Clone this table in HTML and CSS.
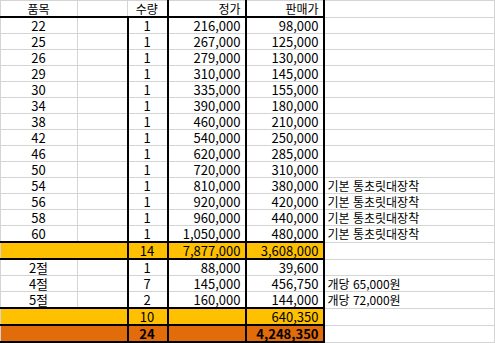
FILE: index.html
```html
<!DOCTYPE html>
<html lang="ko">
<head>
<meta charset="utf-8">
<title>품목 표</title>
<link rel="stylesheet" href="styles.css">
</head>
<body>
<table class="sheet">
  <colgroup>
    <col class="w-item"><col class="w-blank"><col class="w-qty"><col class="w-price"><col class="w-sale"><col class="w-note">
  </colgroup>
  <tr class="hd">
    <td class="item ko">품목</td><td class="blank"></td><td class="qty ko">수량</td><td class="price ko">정가</td><td class="sale ko">판매가</td><td class="note"></td>
  </tr>
  <tr><td class="item">22</td><td class="blank"></td><td class="qty">1</td><td class="price">216,000</td><td class="sale">98,000</td><td class="note"></td></tr>
  <tr><td class="item">25</td><td class="blank"></td><td class="qty">1</td><td class="price">267,000</td><td class="sale">125,000</td><td class="note"></td></tr>
  <tr><td class="item">26</td><td class="blank"></td><td class="qty">1</td><td class="price">279,000</td><td class="sale">130,000</td><td class="note"></td></tr>
  <tr><td class="item">29</td><td class="blank"></td><td class="qty">1</td><td class="price">310,000</td><td class="sale">145,000</td><td class="note"></td></tr>
  <tr><td class="item">30</td><td class="blank"></td><td class="qty">1</td><td class="price">335,000</td><td class="sale">155,000</td><td class="note"></td></tr>
  <tr><td class="item">34</td><td class="blank"></td><td class="qty">1</td><td class="price">390,000</td><td class="sale">180,000</td><td class="note"></td></tr>
  <tr><td class="item">38</td><td class="blank"></td><td class="qty">1</td><td class="price">460,000</td><td class="sale">210,000</td><td class="note"></td></tr>
  <tr><td class="item">42</td><td class="blank"></td><td class="qty">1</td><td class="price">540,000</td><td class="sale">250,000</td><td class="note"></td></tr>
  <tr><td class="item">46</td><td class="blank"></td><td class="qty">1</td><td class="price">620,000</td><td class="sale">285,000</td><td class="note"></td></tr>
  <tr><td class="item">50</td><td class="blank"></td><td class="qty">1</td><td class="price">720,000</td><td class="sale">310,000</td><td class="note"></td></tr>
  <tr><td class="item">54</td><td class="blank"></td><td class="qty">1</td><td class="price">810,000</td><td class="sale">380,000</td><td class="note">기본 통초릿대장착</td></tr>
  <tr><td class="item">56</td><td class="blank"></td><td class="qty">1</td><td class="price">920,000</td><td class="sale">420,000</td><td class="note">기본 통초릿대장착</td></tr>
  <tr><td class="item">58</td><td class="blank"></td><td class="qty">1</td><td class="price">960,000</td><td class="sale">440,000</td><td class="note">기본 통초릿대장착</td></tr>
  <tr><td class="item">60</td><td class="blank"></td><td class="qty">1</td><td class="price">1,050,000</td><td class="sale">480,000</td><td class="note">기본 통초릿대장착</td></tr>
  <tr class="sum"><td class="item"></td><td class="blank"></td><td class="qty">14</td><td class="price">7,877,000</td><td class="sale">3,608,000</td><td class="note"></td></tr>
  <tr><td class="item">2절</td><td class="blank"></td><td class="qty">1</td><td class="price">88,000</td><td class="sale">39,600</td><td class="note"></td></tr>
  <tr><td class="item">4절</td><td class="blank"></td><td class="qty">7</td><td class="price">145,000</td><td class="sale">456,750</td><td class="note">개당 65,000원</td></tr>
  <tr><td class="item">5절</td><td class="blank"></td><td class="qty">2</td><td class="price">160,000</td><td class="sale">144,000</td><td class="note">개당 72,000원</td></tr>
  <tr class="sum"><td class="item"></td><td class="blank"></td><td class="qty">10</td><td class="price"></td><td class="sale">640,350</td><td class="note"></td></tr>
  <tr class="sum total"><td class="item"></td><td class="blank"></td><td class="qty">24</td><td class="price"></td><td class="sale">4,248,350</td><td class="note"></td></tr>
</table>
</body>
</html>
```

FILE: styles.css
```css
html, body {
  margin: 0;
  padding: 0;
  background: #ffffff;
}

body {
  font-family: "Noto Sans CJK KR", "Noto Sans", sans-serif;
  font-size: 13px;
  color: #000000;
}

.sheet {
  border-collapse: collapse;
  table-layout: fixed;
  width: 494px;
}

.w-item { width: 77px; }
.w-blank { width: 50px; }
.w-qty { width: 40px; }
.w-price { width: 78px; }
.w-sale { width: 78px; }
.w-note { width: 171px; }

.sheet tr {
  height: 16px;
}

.sheet td {
  border: 1px solid #d4d4d4;
  padding: 0 4px 0 3px;
  line-height: 15px;
  white-space: nowrap;
  overflow: visible;
  vertical-align: middle;
}

.item { text-align: center; }
.qty { text-align: center; }
.price, .sale { text-align: right; }
.note { text-align: left; font-size: 12px; }
.ko { font-size: 12px; }

.qty, .price, .sale {
  border-left: 2px solid #000000 !important;
  border-right: 2px solid #000000 !important;
}

.hd .qty {
  border-left: 1px solid #d4d4d4 !important;
}

.hd td:not(.note) {
  border-bottom: 2px solid #000000;
}

.sum td:not(.note) {
  background: #ffc000;
  border-top: 2px solid #000000;
  border-bottom: 2px solid #000000;
}

.sum .item {
  border-right: 1px solid #ffc000;
}

.sum .blank {
  border-left: 1px solid #ffc000;
}

.total td:not(.note) {
  background: #e26b0a;
  font-weight: bold;
}

.total .item {
  border-right: 1px solid #e26b0a;
}

.total .blank {
  border-left: 1px solid #e26b0a;
}
```
